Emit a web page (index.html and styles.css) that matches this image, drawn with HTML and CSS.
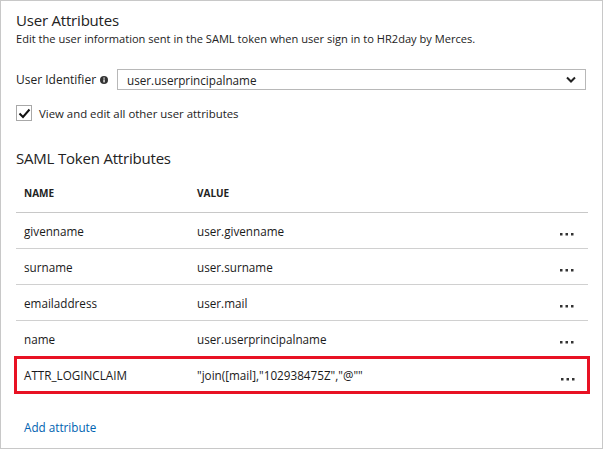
FILE: index.html
```html
<!DOCTYPE html>
<html>
<head>
<meta charset="utf-8">
<link rel="stylesheet" href="styles.css">
</head>
<body>
<div class="frame">
  <h2 class="title">User Attributes</h2>
  <p class="desc">Edit the user information sent in the SAML token when user sign in to HR2day by Merces.</p>

  <div class="field">
    <span class="label">User Identifier
      <svg class="info" width="8" height="8" viewBox="0 0 8 8"><circle cx="4" cy="4" r="4" fill="#333"/><rect x="3.4" y="3.4" width="1.3" height="3" fill="#fff"/><rect x="3.4" y="1.5" width="1.3" height="1.2" fill="#fff"/></svg>
    </span>
    <div class="select">
      <span>user.userprincipalname</span>
      <svg class="chev" width="10" height="7" viewBox="0 0 10 7"><polyline points="1,1.5 5,5.5 9,1.5" fill="none" stroke="#222" stroke-width="2"/></svg>
    </div>
  </div>

  <label class="check">
    <span class="box"><svg width="13" height="11" viewBox="0 0 13 11"><polyline points="1.5,5.5 5,9 11.5,1.5" fill="none" stroke="#111" stroke-width="2"/></svg></span>
    <span>View and edit all other user attributes</span>
  </label>

  <h2 class="title saml">SAML Token Attributes</h2>

  <div class="table">
    <div class="row head"><span class="c-name">NAME</span><span class="c-val">VALUE</span></div>
    <div class="row"><span class="c-name">givenname</span><span class="c-val">user.givenname</span><svg class="dots" width="14" height="3" viewBox="0 0 14 3"><rect x="0" y="0" width="2.5" height="2.5" fill="#333"/><rect x="5.5" y="0" width="2.5" height="2.5" fill="#333"/><rect x="11" y="0" width="2.5" height="2.5" fill="#333"/></svg></div>
    <div class="row"><span class="c-name">surname</span><span class="c-val">user.surname</span><svg class="dots" width="14" height="3" viewBox="0 0 14 3"><rect x="0" y="0" width="2.5" height="2.5" fill="#333"/><rect x="5.5" y="0" width="2.5" height="2.5" fill="#333"/><rect x="11" y="0" width="2.5" height="2.5" fill="#333"/></svg></div>
    <div class="row"><span class="c-name">emailaddress</span><span class="c-val">user.mail</span><svg class="dots" width="14" height="3" viewBox="0 0 14 3"><rect x="0" y="0" width="2.5" height="2.5" fill="#333"/><rect x="5.5" y="0" width="2.5" height="2.5" fill="#333"/><rect x="11" y="0" width="2.5" height="2.5" fill="#333"/></svg></div>
    <div class="row"><span class="c-name">name</span><span class="c-val">user.userprincipalname</span><svg class="dots" width="14" height="3" viewBox="0 0 14 3"><rect x="0" y="0" width="2.5" height="2.5" fill="#333"/><rect x="5.5" y="0" width="2.5" height="2.5" fill="#333"/><rect x="11" y="0" width="2.5" height="2.5" fill="#333"/></svg></div>
    <div class="row hl"><span class="c-name">ATTR_LOGINCLAIM</span><span class="c-val">"join([mail],"102938475Z","@""</span><svg class="dots" width="14" height="3" viewBox="0 0 14 3"><rect x="0" y="0" width="2.5" height="2.5" fill="#333"/><rect x="5.5" y="0" width="2.5" height="2.5" fill="#333"/><rect x="11" y="0" width="2.5" height="2.5" fill="#333"/></svg></div>
  </div>

  <a class="add" href="#">Add attribute</a>
</div>
</body>
</html>
```

FILE: styles.css
```css
* { box-sizing: border-box; }
body {
  margin: 0;
  font-family: "Open Sans", "Noto Sans", sans-serif;
  color: #222;
  background: #fff;
}
.frame {
  width: 603px;
  height: 449px;
  border: 1px solid #c8c8c8;
  padding: 9px 15px 0 15px;
  display: flex;
  flex-direction: column;
}
.title {
  margin: 0;
  font-weight: 400;
  font-size: 15px;
  line-height: 20px;
  letter-spacing: -0.2px;
  color: #222;
}
.desc {
  margin: 0;
  font-size: 11.1px;
  line-height: 18px;
  color: #222;
}
.field {
  display: flex;
  align-items: center;
  margin-top: 21px;
}
.label {
  width: 101px;
  font-size: 12px;
  display: flex;
  align-items: center;
  gap: 4px;
}
.info { flex: none; }
.select {
  width: 469px;
  height: 21px;
  border: 1px solid #b8b8b8;
  display: flex;
  align-items: center;
  justify-content: space-between;
  padding: 0 9px;
  font-size: 11.7px;
}
.check {
  display: flex;
  align-items: center;
  gap: 7px;
  margin-top: 15px;
  font-size: 11.4px;
}
.box {
  width: 16px;
  height: 16px;
  border: 1px solid #a8a8a8;
  display: flex;
  align-items: center;
  justify-content: center;
}
.saml { margin-top: 27px; }
.table {
  margin-top: 7px;
  width: 572px;
  display: flex;
  flex-direction: column;
}
.row {
  display: flex;
  align-items: center;
  height: 36px;
  border-bottom: 1px solid #d0d0d0;
  padding-left: 8px;
  font-size: 11.7px;
  color: #1a1a1a;
}
.row.head {
  height: 38px;
  font-size: 10px;
  font-weight: 700;
  color: #222;
  border-bottom-color: #c8c8c8;
  padding-bottom: 2px;
}
.c-name { width: 173px; }
.c-val { flex: 1; }
.dots { margin-right: 14px; margin-top: 8px; }
.row.hl {
  border-bottom: none;
  outline: 3px solid #e81123;
  outline-offset: -2px;
  margin: 0 -1px;
  padding-left: 9px;
}
.add {
  margin-top: 26px;
  margin-left: 8px;
  font-size: 11.7px;
  color: #0063b1;
  text-decoration: none;
}
```
